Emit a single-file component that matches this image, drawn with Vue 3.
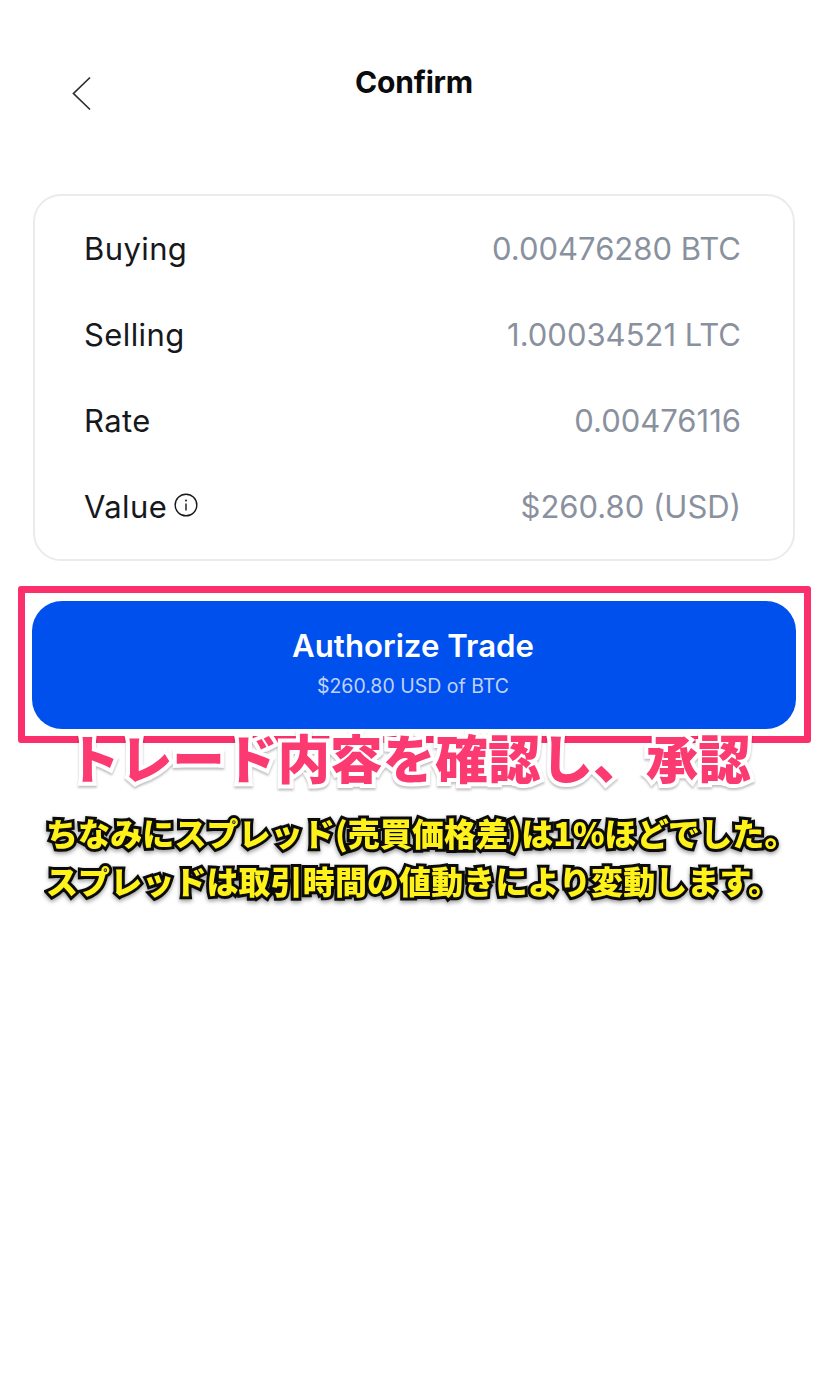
<script setup>
const rows = [
  { label: 'Buying', value: '0.00476280 BTC' },
  { label: 'Selling', value: '1.00034521 LTC' },
  { label: 'Rate', value: '0.00476116' },
  { label: 'Value', value: '$260.80 (USD)', info: true },
];
</script>

<template>
  <div class="page">
    <header class="top">
      <svg class="back" width="22" height="36" viewBox="0 0 22 36" fill="none">
        <path d="M19 2.5 L2.5 18.5 L19 34.5" stroke="#2b2d33" stroke-width="1.7" />
      </svg>
      <h1>Confirm</h1>
    </header>

    <section class="card">
      <div v-for="row in rows" :key="row.label" class="row">
        <span class="label">
          {{ row.label }}
          <svg v-if="row.info" class="info" width="24" height="24" viewBox="0 0 24 24" fill="none">
            <circle cx="12" cy="12" r="10.8" stroke="#17181c" stroke-width="1.4" />
            <circle cx="12" cy="7.6" r="1" fill="#17181c" />
            <path d="M12 10.6v7" stroke="#17181c" stroke-width="1.4" />
          </svg>
        </span>
        <span class="value">{{ row.value }}</span>
      </div>
    </section>

    <div class="action">
      <div class="frame"></div>
      <button class="authorize">
        <strong>Authorize Trade</strong>
        <small>$260.80 USD of BTC</small>
      </button>
    </div>

    <p class="headline">トレード内容を確認し、承認</p>
    <p class="note">ちなみにスプレッド(売買価格差)は1%ほどでした。</p>
    <p class="note second">スプレッドは取引時間の値動きにより変動します。</p>
  </div>
</template>

<style scoped>
.page {
  width: 828px;
  height: 1397px;
  box-sizing: border-box;
  padding: 0 32px;
  overflow: hidden;
  background: #fff;
  font-family: Inter, "Noto Sans", sans-serif;
}

.top {
  position: relative;
  height: 194px;
}

.back {
  position: absolute;
  left: 39px;
  top: 75px;
}

.top h1 {
  margin: 0;
  padding-top: 62px;
  text-align: center;
  font-size: 30px;
  line-height: 40px;
  font-weight: 700;
  letter-spacing: -0.2px;
  color: #0a0b0d;
}

.card {
  box-sizing: border-box;
  height: 367px;
  margin: 0 1px;
  padding: 9px 52px 10px 49px;
  border: 2px solid #e9ebed;
  border-radius: 28px;
}

.row {
  display: flex;
  align-items: center;
  justify-content: space-between;
  height: 86px;
  font-size: 31px;
}

.label {
  display: flex;
  align-items: center;
  gap: 7px;
  letter-spacing: 0.4px;
  color: #17181c;
}

.info {
  margin-top: -3px;
}

.value {
  color: #8a919e;
}

.action {
  position: relative;
  margin-top: 40px;
}

.frame {
  position: absolute;
  left: -14px;
  right: -15px;
  top: -15px;
  bottom: -14px;
  border: 7.5px solid #fb2f6c;
  border-radius: 3px;
}

.authorize {
  position: relative;
  display: flex;
  flex-direction: column;
  align-items: center;
  width: 764px;
  height: 128px;
  padding: 25px 2px 0 0;
  border: none;
  border-radius: 30px;
  background: #0050ee;
  color: #fff;
  font-family: inherit;
}

.authorize strong {
  font-size: 31.2px;
  line-height: 40px;
  font-weight: 600;
}

.authorize small {
  margin-top: 7px;
  font-size: 19.5px;
  line-height: 26px;
  color: #c0d2fb;
}

.headline {
  position: relative;
  margin: -3px -32px 0;
  height: 60px;
  padding-right: 10px;
  text-align: center;
  font-family: "Noto Sans CJK JP", sans-serif;
  font-size: 52.6px;
  line-height: 60px;
  font-weight: 900;
  color: #fb3a72;
  -webkit-text-stroke: 8px #fff;
  paint-order: stroke fill;
  filter: drop-shadow(0 2px 1px rgba(0, 0, 0, 0.25));
}

.note {
  margin: 24px -32px 0 14px;
  font-family: "Noto Sans CJK JP", sans-serif;
  font-size: 32px;
  line-height: 44px;
  font-weight: 900;
  letter-spacing: 0.1px;
  white-space: nowrap;
  color: #fff21a;
  -webkit-text-stroke: 6px #0b0b0b;
  paint-order: stroke fill;
  filter: drop-shadow(0 2px 2px rgba(0, 0, 0, 0.4));
}

.note.second {
  margin-top: 4px;
}
</style>
